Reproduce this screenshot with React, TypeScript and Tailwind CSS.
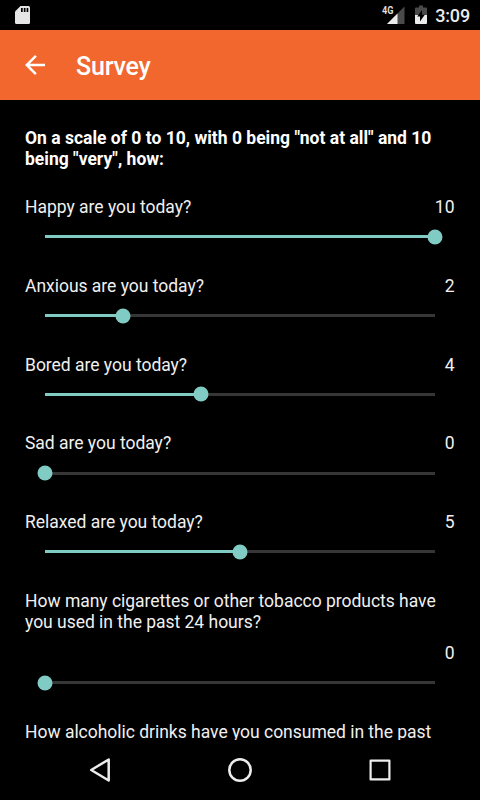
import React from "react";

type Question = { text: string; value?: number; stacked?: boolean };

const questions: Question[] = [
  { text: "Happy are you today?", value: 10 },
  { text: "Anxious are you today?", value: 2 },
  { text: "Bored are you today?", value: 4 },
  { text: "Sad are you today?", value: 0 },
  { text: "Relaxed are you today?", value: 5 },
  { text: "How many cigarettes or other tobacco products have you used in the past 24 hours?", value: 0, stacked: true },
  { text: "How alcoholic drinks have you consumed in the past" },
];

function StatusBar() {
  return (
    <div className="flex h-[30px] shrink-0 items-center justify-between bg-black pr-[10px] pl-[15px]">
      <svg width="16" height="20" viewBox="0 0 16 20">
        <path d="M5.5 1H13.5Q15 1 15 2.5V17.5Q15 19 13.5 19H1.500Q0 19 0 17.5V6.5Z" fill="#e6e6e6" />
        <path d="M6 3h1.700v4H6zM8.800 3h1.700v4H8.800zM11.600 3h1.700v4h-1.700z" fill="#000" />
      </svg>
      <div className="flex items-center">
        <svg width="24" height="20" viewBox="0 0 24 20">
          <path d="M22.500 1.500V19H5Z" fill="#4a4a4a" />
          <path d="M15.500 8.500V19H5Z" fill="#ececec" />
          <text x="0" y="9.300" fontSize="11" fontWeight="700" fill="#dcdcdc" textLength="11.500" lengthAdjust="spacingAndGlyphs">4G</text>
        </svg>
        <svg className="ml-[9px]" width="12" height="20" viewBox="0 0 12 20">
          <path d="M4 0.500h4v2h3q1 0 1 1V10H0V3.500q0-1 1-1h3z" fill="#4a4a4a" />
          <path d="M0 10h12v8q0 1-1 1H1q-1 0-1-1z" fill="#ececec" />
          <path d="M7 5v4.800h2.800L5 16.500v-5H2.200z" fill="#000" />
        </svg>
        <span className="ml-2 pt-px text-[18px] leading-[29px] font-medium tracking-[-0.15px] text-[#ececec]">3:09</span>
      </div>
    </div>
  );
}

function Slider({ value }: { value: number }) {
  return (
    <div className="relative mx-5 h-[3px] bg-[#363636]">
      <div className="h-full bg-[#80cbc4]" style={{ width: `${value * 10}%` }} />
      <div
        className="absolute top-1/2 size-[15px] -translate-x-1/2 -translate-y-1/2 rounded-full bg-[#80cbc4]"
        style={{ left: `${value * 10}%` }}
      />
    </div>
  );
}

function QuestionRow({ text, value, stacked }: Question) {
  return (
    <div className="pb-[37.500px]">
      <div className={stacked ? "flex flex-col gap-[10.500px]" : "flex justify-between"}>
        <p>{text}</p>
        {value !== undefined && <span className="pr-[0.500px] text-right">{value}</span>}
      </div>
      {value !== undefined && (
        <div className="pt-[17.500px]">
          <Slider value={value} />
        </div>
      )}
    </div>
  );
}

export default function App() {
  return (
    <div className="flex h-[800px] w-[480px] flex-col overflow-hidden bg-black font-[Roboto,sans-serif] text-[#f0f0f0]">
      <StatusBar />
      <header className="flex h-[70px] shrink-0 items-center bg-[#f1672d] pl-5 text-white">
        <svg width="30" height="30" viewBox="0 0 24 24" fill="#fff">
          <path d="M20 11H7.830l5.590-5.590L12 4l-8 8 8 8 1.410-1.410L7.830 13H20v-2z" />
        </svg>
        <h1 className="pt-[3px] pl-[26px] text-[25px] leading-[30px] font-medium tracking-[-0.2px]">Survey</h1>
      </header>
      <main className="min-h-0 flex-1 overflow-hidden px-[25px] pt-7 text-[17.500px] leading-[20.750px] tracking-[-0.02px]">
        <p className="pb-[27.500px] font-bold tracking-normal text-white">On a scale of 0 to 10, with 0 being "not at all" and 10 being "very", how:</p>
        {questions.map((q) => (
          <QuestionRow key={q.text} {...q} />
        ))}
      </main>
      <nav className="flex h-[60px] shrink-0 items-center justify-center gap-[110px] bg-black">
        <svg width="30" height="30" viewBox="0 0 30 30" fill="none" stroke="#ececec" strokeWidth="2.500" strokeLinejoin="round">
          <path d="M23.700 4.500V25.500L6.200 15Z" />
        </svg>
        <svg width="30" height="30" viewBox="0 0 30 30" fill="none" stroke="#ececec" strokeWidth="2.500">
          <circle cx="15" cy="15" r="10.700" />
        </svg>
        <svg width="30" height="30" viewBox="0 0 30 30" fill="none" stroke="#ececec" strokeWidth="2.200" strokeLinejoin="round">
          <rect x="5.600" y="5.600" width="18.800" height="18.800" />
        </svg>
      </nav>
    </div>
  );
}
